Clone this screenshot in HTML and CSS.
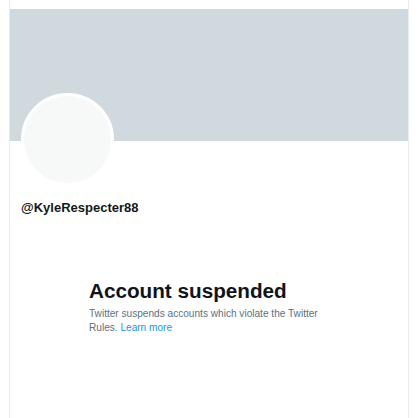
FILE: index.html
```html
<!DOCTYPE html>
<html lang="en">
<head>
<meta charset="utf-8">
<title>@KyleRespecter88</title>
<link rel="stylesheet" href="styles.css">
</head>
<body>
<div class="page">
  <main class="column">
    <div class="banner"></div>
    <div class="profile">
      <div class="avatar"></div>
      <div class="handle">@KyleRespecter88</div>
    </div>
    <section class="notice">
      <h1 class="notice-title">Account suspended</h1>
      <p class="notice-text">Twitter suspends accounts which violate the Twitter Rules. <a class="notice-link" href="#">Learn more</a></p>
    </section>
  </main>
</div>
</body>
</html>
```

FILE: styles.css
```css
html, body {
  margin: 0;
  padding: 0;
  background: #ffffff;
  height: 100%;
}
body {
  font-family: "Liberation Sans", Arial, sans-serif;
  color: #14171a;
}
.page {
  padding: 0 9px;
  height: 100%;
}
.column {
  box-sizing: border-box;
  width: 400px;
  min-height: 100%;
  border-left: 1px solid #e6ecf0;
  border-right: 1px solid #e6ecf0;
  padding-top: 9px;
}
.banner {
  height: 132px;
  background: #cfd9de;
}
.profile {
  padding: 0 11px;
}
.avatar {
  box-sizing: border-box;
  width: 93px;
  height: 93px;
  margin-top: -48px;
  border-radius: 50%;
  border: 3px solid #ffffff;
  background: #f7f9f9;
}
.handle {
  margin-top: 14px;
  font-size: 13px;
  font-weight: 700;
  line-height: 15px;
  color: #14171a;
}
.notice {
  width: 240px;
  margin: 63px auto 0;
}
.notice-title {
  margin: 0;
  font-size: 20.7px;
  font-weight: 700;
  line-height: 25px;
  color: #0f1419;
}
.notice-text {
  margin: 4px 0 0;
  font-size: 10.1px;
  line-height: 14px;
  color: #5b7083;
}
.notice-link {
  color: #1b95e0;
  text-decoration: none;
}
```
